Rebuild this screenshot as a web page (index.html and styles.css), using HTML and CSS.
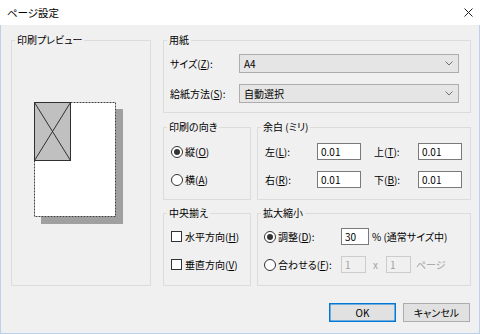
FILE: index.html
```html
<!DOCTYPE html>
<html lang="ja">
<head>
<meta charset="utf-8">
<title>ページ設定</title>
<link rel="stylesheet" href="styles.css">
</head>
<body>
<div class="titlebar">
  <span class="title">ページ設定</span>
  <svg class="close" width="9" height="9" viewBox="0 0 9 9"><path d="M0.5 0.5L8.5 8.5M8.5 0.5L0.5 8.5" stroke="#222" stroke-width="1" fill="none"/></svg>
</div>
<div class="window">
  <div class="groups">
    <fieldset class="group preview">
      <legend>印刷プレビュー</legend>
      <div class="preview-area">
        <svg class="page" width="90" height="123" viewBox="0 0 90 123">
          <rect x="7" y="7" width="82" height="115" fill="#a0a0a0"/>
          <rect x="0.5" y="0.5" width="81" height="114" fill="#fff" stroke="#404040" stroke-dasharray="2 1"/>
          <rect x="0.5" y="0.5" width="36" height="58" fill="#c0c0c0" stroke="#303030"/>
          <path d="M0.5 0.5L36.5 58.5M36.5 0.5L0.5 58.5" stroke="#303030" stroke-width="1" fill="none"/>
        </svg>
      </div>
    </fieldset>
    <div class="right">
      <fieldset class="group paper">
        <legend>用紙</legend>
        <div class="paper-grid">
          <span class="lbl">サイズ(<u>Z</u>):</span>
          <div class="select"><span>A4</span><svg width="8" height="5" viewBox="0 0 8 5"><path d="M0.5 0.5L4 4L7.5 0.5" stroke="#707070" fill="none"/></svg></div>
          <span class="lbl">給紙方法(<u>S</u>):</span>
          <div class="select"><span>自動選択</span><svg width="8" height="5" viewBox="0 0 8 5"><path d="M0.5 0.5L4 4L7.5 0.5" stroke="#707070" fill="none"/></svg></div>
        </div>
      </fieldset>
      <div class="row row-mid">
        <fieldset class="group small">
          <legend>印刷の向き</legend>
          <div class="opts">
            <div class="opt"><span class="radio checked"></span><span>縦(<u>O</u>)</span></div>
            <div class="opt"><span class="radio"></span><span>横(<u>A</u>)</span></div>
          </div>
        </fieldset>
        <fieldset class="group wide">
          <legend>余白 (ミリ)</legend>
          <div class="margin-grid">
            <span class="lbl">左(<u>L</u>):</span><div class="field">0.01</div>
            <span class="lbl">上(<u>T</u>):</span><div class="field">0.01</div>
            <span class="lbl">右(<u>R</u>):</span><div class="field">0.01</div>
            <span class="lbl">下(<u>B</u>):</span><div class="field">0.01</div>
          </div>
        </fieldset>
      </div>
      <div class="row row-bottom">
        <fieldset class="group small">
          <legend>中央揃え</legend>
          <div class="opts">
            <div class="opt"><span class="check"></span><span>水平方向(<u>H</u>)</span></div>
            <div class="opt"><span class="check"></span><span>垂直方向(<u>V</u>)</span></div>
          </div>
        </fieldset>
        <fieldset class="group wide">
          <legend>拡大縮小</legend>
          <div class="scale-grid">
            <div class="opt"><span class="radio checked"></span><span>調整(<u>D</u>):</span></div>
            <div class="line"><div class="field pct">30</div><span class="after">% (通常サイズ中)</span></div>
            <div class="opt"><span class="radio"></span><span>合わせる(<u>F</u>):</span></div>
            <div class="line"><div class="field off">1</div><span class="x">x</span><div class="field off">1</div><span class="pages">ページ</span></div>
          </div>
        </fieldset>
      </div>
    </div>
  </div>
  <div class="buttons">
    <button class="btn default">OK</button>
    <button class="btn">キャンセル</button>
  </div>
</div>
</body>
</html>
```
FILE: styles.css
```css
* { box-sizing: border-box; }
html, body { margin: 0; padding: 0; }
body {
  width: 480px;
  height: 334px;
  overflow: hidden;
  background: #f0f0f0;
  font-family: "Noto Sans CJK JP", "Noto Sans", sans-serif;
  font-size: 10px;
  font-feature-settings: "palt";
  color: #000;
  display: flex;
  flex-direction: column;
}
u { text-decoration: underline; text-underline-offset: 1px; }

.titlebar {
  height: 25px;
  background: #fff;
  display: flex;
  align-items: center;
  justify-content: space-between;
  padding: 0 7px 0 7px;
  flex: none;
}
.title { font-size: 10.5px; }
.close { display: block; }

.window {
  flex: 1;
  border: 1px solid #b9d1ea;
  border-top: none;
  padding: 8px 8px 0 10px;
  display: flex;
  flex-direction: column;
}
.groups {
  display: grid;
  grid-template-columns: 140px 308px;
  column-gap: 12px;
}
.group {
  margin: 0;
  padding: 0;
  border: 1px solid #dcdcdc;
  min-width: 0;
}
.group legend {
  margin-left: 3px;
  padding: 0 2px;
  line-height: 14px;
  font-size: 10px;
}

.preview-area {
  height: 100%;
  display: flex;
  align-items: center;
  justify-content: center;
}
.page { display: block; margin: 0 5px 5px 0; }

.right {
  display: flex;
  flex-direction: column;
  gap: 7px;
}
.row {
  display: grid;
  grid-template-columns: 88px 214px;
  column-gap: 6px;
}
.row-bottom { margin-top: -1px; }

.paper-grid {
  display: grid;
  grid-template-columns: 69px 1fr;
  row-gap: 11px;
  align-items: center;
  padding: 7px 11px 9px 6px;
}
.lbl { white-space: nowrap; }
.select {
  height: 19px;
  background: #e5e5e5;
  border: 1px solid #adadad;
  display: flex;
  align-items: center;
  justify-content: space-between;
  padding: 0 5px 0 4px;
}
.select svg { display: block; }

.opts {
  display: flex;
  flex-direction: column;
  gap: 11px;
  padding: 9px 0 11px 7px;
}
.row-bottom .opts { padding: 8px 0 12px 7px; }
.opt {
  height: 17px;
  display: flex;
  align-items: center;
  white-space: nowrap;
}
.radio {
  width: 12px;
  height: 12px;
  border: 1px solid #333;
  border-radius: 50%;
  background: #fff;
  margin-right: 2px;
  display: flex;
  align-items: center;
  justify-content: center;
  flex: none;
}
.radio.checked::after {
  content: "";
  width: 6px;
  height: 6px;
  border-radius: 50%;
  background: #333;
}
.check {
  width: 11px;
  height: 11px;
  border: 1px solid #333;
  background: #fff;
  margin-right: 3px;
  flex: none;
}

.margin-grid {
  display: grid;
  grid-template-columns: 52px 57px 44px 44px;
  grid-auto-rows: 17px;
  row-gap: 11px;
  align-items: center;
  padding: 9px 0 11px 7px;
}
.field {
  width: 44px;
  height: 17px;
  background: #fff;
  border: 1px solid #7a7a7a;
  display: flex;
  align-items: center;
  padding-left: 3px;
}

.scale-grid {
  display: grid;
  grid-template-columns: 77px 1fr;
  grid-auto-rows: 17px;
  row-gap: 11px;
  align-items: center;
  padding: 8px 0 12px 6px;
}
.scale-grid .radio { margin-right: 2px; }
.line { display: flex; align-items: center; white-space: nowrap; }
.field.pct { width: 28px; }
.field.off {
  width: 25px;
  background: #f0f0f0;
  border-color: #cccccc;
  color: #a0a0a0;
}
.after { margin-left: 3px; }
.x { color: #a0a0a0; margin: 0 8px 0 7px; }
.pages { color: #a0a0a0; margin-left: 5px; }

.buttons {
  display: flex;
  justify-content: flex-end;
  gap: 7px;
  margin-top: 17px;
  padding-right: 1px;
}
.btn {
  width: 67px;
  height: 19px;
  padding: 0;
  background: #e1e1e1;
  border: 1px solid #adadad;
  font-family: inherit;
  font-size: 10px;
  font-feature-settings: "palt";
  color: #000;
  display: flex;
  align-items: center;
  justify-content: center;
}
.btn.default {
  border-color: #0078d7;
  box-shadow: inset 0 0 0 0.5px #0078d7;
}
```
